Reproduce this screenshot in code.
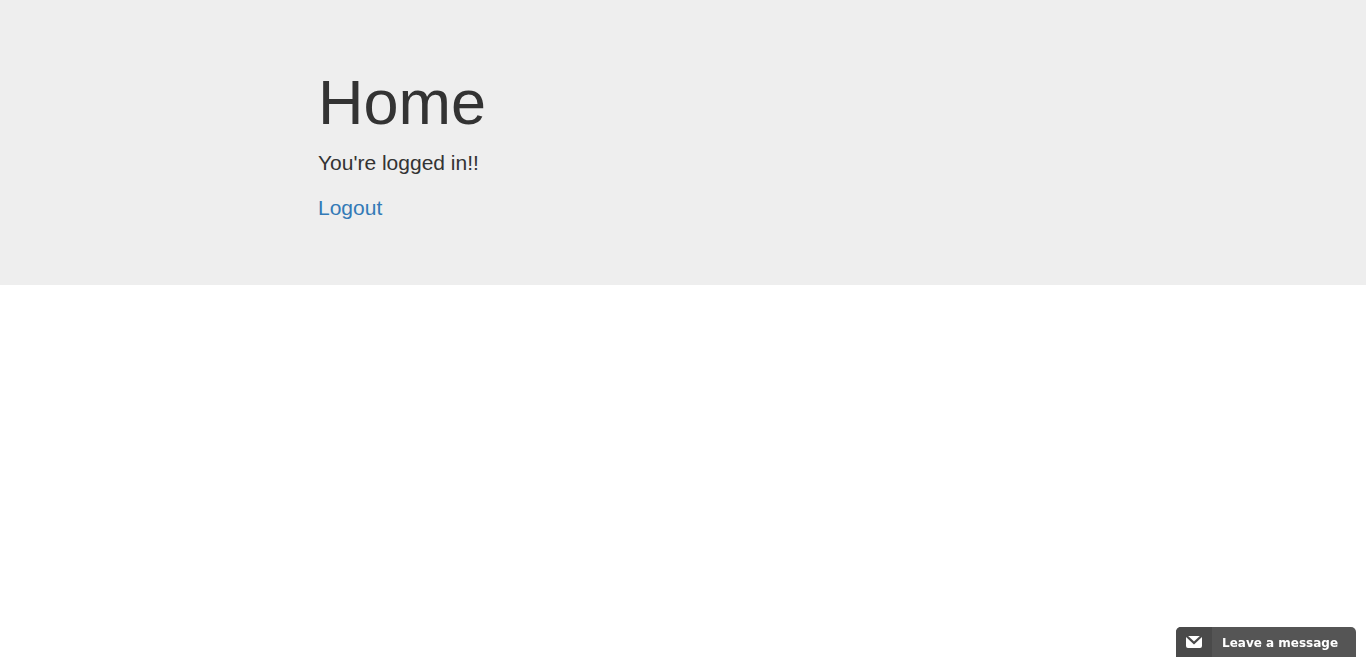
<main class="jumbotron">
  <div class="container">
    <div class="column">
      <h1>Home</h1>
      <p>You're logged in!!</p>
      <p><a href="#/login">Logout</a></p>
    </div>
  </div>
</main>

<button class="chat" type="button">
  <span class="badge">
    <svg width="16" height="12" viewBox="0 0 16 12" aria-hidden="true">
      <path d="M2.2 0H13.8L8 5.4Z" fill="#fff" />
      <path d="M0 1 8 8.4 16 1V10Q16 12 14 12H2Q0 12 0 10Z" fill="#fff" />
    </svg>
  </span>
  <span class="label">Leave a message</span>
</button>

<style>
  :global(body) {
    margin: 0;
    background: #fff;
    color: #333;
    font-family: "Liberation Sans", Arial, sans-serif;
  }

  .jumbotron {
    padding: 47px 0;
    background: #eee;
  }

  .container {
    box-sizing: border-box;
    max-width: 1170px;
    margin: 0 auto;
    padding: 0 15px;
  }

  .column {
    box-sizing: border-box;
    width: 66.6667%;
    margin: 0 auto;
    padding: 0 15px;
  }

  h1 {
    margin: 21px 0 11px;
    font-size: 63px;
    font-weight: 400;
    line-height: 69px;
  }

  p {
    margin: 0 0 15px;
    font-size: 21px;
    font-weight: 400;
    line-height: 30px;
  }

  a {
    color: #337ab7;
    text-decoration: none;
  }

  .chat {
    position: fixed;
    right: 10px;
    bottom: 0;
    display: flex;
    align-items: flex-start;
    width: 180px;
    height: 30px;
    padding: 0;
    border: 0;
    border-radius: 5px 5px 0 0;
    overflow: hidden;
    background: #555;
    color: #fff;
    font: bold 12px/32px "DejaVu Sans", Verdana, sans-serif;
    text-align: left;
    cursor: pointer;
  }

  .badge {
    display: flex;
    align-items: center;
    justify-content: center;
    width: 36px;
    height: 30px;
    background: #4a4a4a;
  }

  .label {
    padding-left: 10px;
  }
</style>
